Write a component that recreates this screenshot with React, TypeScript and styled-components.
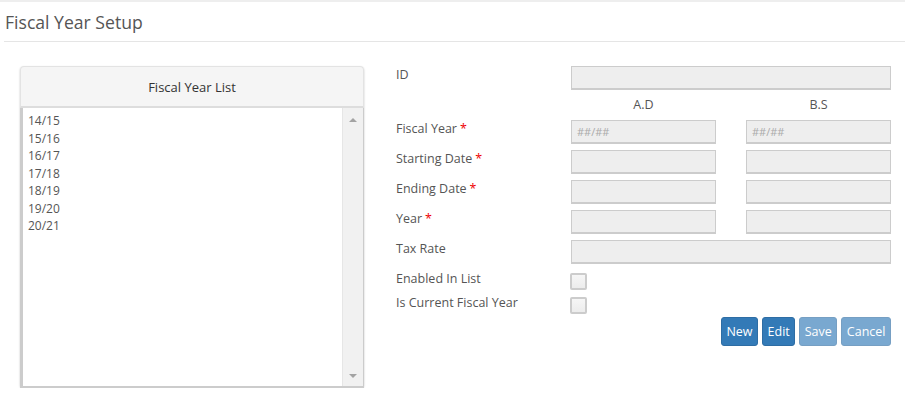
import styled, { createGlobalStyle } from 'styled-components'

const GlobalStyle = createGlobalStyle`
  body {
    margin: 0;
    background: #fff;
    font-family: "Open Sans", "Liberation Sans", sans-serif;
    color: #555;
  }
`

const Page = styled.div`
  width: 905px;
  border-top: 2px solid #eee;
`

const PageHeader = styled.div`
  margin: 0 0 0 4px;
  padding: 9px 0 8px 1px;
  border-bottom: 1px solid #e5e5e5;
`

const PageTitle = styled.h1`
  margin: 0;
  font-size: 17.6px;
  font-weight: 400;
  line-height: 22px;
  color: #555;
`

const Body = styled.div`
  display: flex;
  align-items: flex-start;
  gap: 32px;
  padding: 24px 14px 0 20px;
`

const ListPanel = styled.div`
  width: 344px;
  display: flex;
  flex-direction: column;
  border-radius: 4px;
  box-shadow: 0 1px 2px rgba(0, 0, 0, 0.25);
`

const ListHeader = styled.div`
  height: 39px;
  display: flex;
  align-items: center;
  justify-content: center;
  background: #f5f5f5;
  border: 1px solid #e3e3e3;
  border-bottom: 2px solid #ddd;
  border-radius: 4px 4px 0 0;
  font-size: 13px;
  color: #333;
`

const ListBox = styled.div`
  height: 278px;
  display: flex;
  border-left: 3px solid #ccc;
  border-right: 1px solid #ccc;
  border-bottom: 2px solid #ccc;
`

const ListItems = styled.ul`
  flex: 1;
  margin: 0;
  padding: 4px 0 0 5px;
  list-style: none;
  font-size: 12px;
  line-height: 17.5px;
  color: #555;
`

const ScrollTrack = styled.div`
  width: 20px;
  display: flex;
  flex-direction: column;
  justify-content: space-between;
  align-items: center;
  padding: 10px 0 8px;
  background: #f1f1f1;
  border-left: 1px solid #e6e6e6;
`

const Arrow = styled.span<{ $down?: boolean }>`
  width: 0;
  height: 0;
  border-left: 4px solid transparent;
  border-right: 4px solid transparent;
  ${(p) =>
    p.$down ? 'border-top: 4px solid #a3a3a3;' : 'border-bottom: 4px solid #a3a3a3;'}
`

const Form = styled.div`
  display: grid;
  grid-template-columns: 145px 145px 145px;
  column-gap: 30px;
  row-gap: 6px;
  align-items: start;
  align-content: start;
`

const Label = styled.div`
  font-size: 12.5px;
  line-height: 18px;
  color: #555;
  white-space: nowrap;
`

const Req = styled.span`
  color: #e00;
  margin-left: 3px;
`

const ColHead = styled.div`
  text-align: center;
  font-size: 12.5px;
  line-height: 18px;
  color: #555;
`

const Input = styled.input<{ $wide?: boolean }>`
  box-sizing: border-box;
  height: 24px;
  width: 100%;
  margin: 0;
  padding: 0 5px;
  background: #eee;
  border: 1px solid #ccc;
  border-width: 1px 1px 2px 1px;
  border-radius: 0;
  font-family: "Open Sans", "Liberation Sans", sans-serif;
  font-size: 11px;
  color: #999;
  ${(p) => (p.$wide ? 'grid-column: 2 / 4;' : '')}
  &::placeholder {
    color: #aaa;
  }
`

const Check = styled.span`
  box-sizing: border-box;
  width: 17px;
  height: 17px;
  margin: 3px 0 -2px -1px;
  display: block;
  border: 2px solid #ccc;
  background: linear-gradient(#f6f6f6, #ececec);
  border-radius: 2px;
`

const Actions = styled.div`
  grid-column: 1 / 4;
  display: flex;
  justify-content: flex-end;
  gap: 4px;
  margin-top: -1px;
`

const Button = styled.button<{ $disabled?: boolean }>`
  height: 29px;
  padding: 0 4.5px;
  border: 1px solid #2e6da4;
  border-radius: 3px;
  background: #337ab7;
  color: #fff;
  font-family: "Open Sans", "Liberation Sans", sans-serif;
  font-size: 12.5px;
  ${(p) => (p.$disabled ? 'opacity: 0.65;' : '')}
`

const years = ['14/15', '15/16', '16/17', '17/18', '18/19', '19/20', '20/21']

const dateRows = [
  { label: 'Fiscal Year', placeholder: '##/##' },
  { label: 'Starting Date', placeholder: '' },
  { label: 'Ending Date', placeholder: '' },
  { label: 'Year', placeholder: '' },
]

export default function App() {
  return (
    <>
      <GlobalStyle />
      <Page>
        <PageHeader>
          <PageTitle>Fiscal Year Setup</PageTitle>
        </PageHeader>
        <Body>
          <ListPanel>
            <ListHeader>Fiscal Year List</ListHeader>
            <ListBox>
              <ListItems>
                {years.map((y) => (
                  <li key={y}>{y}</li>
                ))}
              </ListItems>
              <ScrollTrack>
                <Arrow />
                <Arrow $down />
              </ScrollTrack>
            </ListBox>
          </ListPanel>
          <Form>
            <Label>ID</Label>
            <Input $wide />
            <div />
            <ColHead>A.D</ColHead>
            <ColHead>B.S</ColHead>
            {dateRows.map((r) => [
              <Label key={r.label + '-l'}>
                {r.label}
                <Req>*</Req>
              </Label>,
              <Input key={r.label + '-a'} placeholder={r.placeholder} />,
              <Input key={r.label + '-b'} placeholder={r.placeholder} />,
            ])}
            <Label>Tax Rate</Label>
            <Input $wide />
            <Label>Enabled In List</Label>
            <Check />
            <div />
            <Label>Is Current Fiscal Year</Label>
            <Check />
            <div />
            <Actions>
              <Button>New</Button>
              <Button>Edit</Button>
              <Button $disabled>Save</Button>
              <Button $disabled>Cancel</Button>
            </Actions>
          </Form>
        </Body>
      </Page>
    </>
  )
}
